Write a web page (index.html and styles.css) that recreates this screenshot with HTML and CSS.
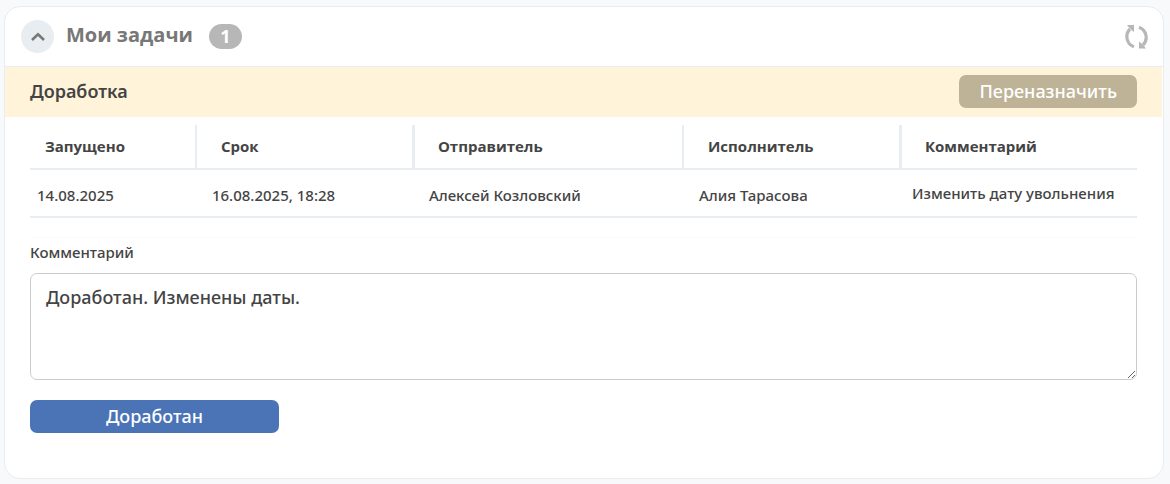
FILE: index.html
```html
<!DOCTYPE html>
<html lang="ru">
<head>
<meta charset="utf-8">
<meta name="viewport" content="width=device-width, initial-scale=1">
<title>Мои задачи</title>
<link rel="stylesheet" href="styles.css">
</head>
<body>
<main class="card">
  <header class="card-header">
    <button class="toggle" type="button" aria-label="Свернуть">
      <svg width="14" height="10" viewBox="0 0 14 10" fill="none" stroke="#777" stroke-width="2.6" aria-hidden="true"><path d="M1 8 7 2.300 13 8"/></svg>
    </button>
    <h1 class="title">Мои задачи</h1>
    <span class="count">1</span>
    <button class="refresh" type="button" aria-label="Обновить">
      <svg width="24" height="24" viewBox="0 0 24 24" aria-hidden="true">
        <g fill="none" stroke="#b7b7b7" stroke-width="3.200"><path d="M10 21.800A10.800 10.800 0 0 1 6 4"/><path d="M15 2.200A10.800 10.800 0 0 1 19 20"/></g>
        <path fill="#b7b7b7" d="M3 0H10V7L7.500 5 5 2.500ZM22 23.500H15V16.500L17.500 18.500 20 21Z"/>
      </svg>
    </button>
  </header>
  <section class="task-bar">
    <h2 class="task-name">Доработка</h2>
    <button class="button reassign" type="button">Переназначить</button>
  </section>
  <section class="task-body">
    <table class="tasks">
      <colgroup><col class="col-start"><col class="col-due"><col class="col-sender"><col class="col-assignee"><col></colgroup>
      <thead>
        <tr><th>Запущено</th><th>Срок</th><th class="wide-rule">Отправитель</th><th>Исполнитель</th><th class="wide-rule">Комментарий</th></tr>
      </thead>
      <tbody>
        <tr><td>14.08.2025</td><td>16.08.2025, 18:28</td><td>Алексей Козловский</td><td>Алия Тарасова</td><td class="note">Изменить дату увольнения</td></tr>
      </tbody>
    </table>
    <form class="reply">
      <label class="reply-label" for="comment">Комментарий</label>
      <textarea class="reply-text" id="comment">Доработан. Изменены даты.</textarea>
      <button class="button submit" type="button">Доработан</button>
    </form>
  </section>
</main>
</body>
</html>
```
FILE: styles.css
```css
* {
  box-sizing: border-box;
}

body {
  margin: 0;
  padding: 6px 6px 5px 4px;
  background: #f8f9fb;
  color: #444;
  font-family: "Noto Sans", "Open Sans", sans-serif;
  font-size: 15px;
  font-weight: 500;
  line-height: 20px;
}

button {
  border: 0;
  padding: 0;
  font: inherit;
  cursor: pointer;
}

.card {
  padding-bottom: 45px;
  border: 1px solid #e7edf0;
  border-radius: 16px;
  background: #fff;
}

.card-header {
  display: flex;
  align-items: center;
  height: 60px;
  padding: 0 15px 0 16px;
  border-bottom: 1px solid #e7edf0;
}

.toggle {
  display: grid;
  place-items: center;
  width: 33px;
  height: 33px;
  border-radius: 50%;
  background: #e7edf0;
}

.title {
  margin: 0 16px 4px 12px;
  color: #777;
  font-family: "Open Sans", "Noto Sans", sans-serif;
  font-size: 20px;
  font-weight: 700;
  line-height: 24px;
}

.count {
  width: 33px;
  border-radius: 13px;
  background: #b7b7b7;
  color: #fff;
  font-size: 18px;
  font-weight: 700;
  line-height: 25px;
  text-align: center;
}

.refresh {
  display: flex;
  margin-left: auto;
  background: none;
}

.task-bar {
  display: flex;
  align-items: center;
  justify-content: space-between;
  height: 50px;
  margin-right: 1px;
  padding: 0 25px 2px;
  background: #fff4da;
}

.task-name {
  margin: 0;
  font-size: 18px;
  font-weight: 600;
  line-height: 24px;
}

.button {
  height: 33px;
  border-radius: 7px;
  color: #fff;
  font-size: 18px;
  font-weight: 500;
  line-height: 32px;
}

.reassign {
  padding: 0 20px;
  background: #beb397;
}

.task-body {
  padding: 8px 26px 0 25px;
}

.tasks {
  width: 100%;
  table-layout: fixed;
  border-spacing: 0;
  text-align: left;
}

.col-start {
  width: 14.9%;
}

.col-due,
.col-assignee {
  width: 19.6%;
}

.col-sender {
  width: 24.4%;
}

th {
  height: 45px;
  padding: 0 15px 1px 24px;
  border-bottom: 2px solid #e7edf0;
  border-left: 2px solid #e7edf0;
  font-family: "Open Sans", "Noto Sans", sans-serif;
  font-weight: 700;
}

th:first-child {
  padding-left: 15px;
  border-left: 0;
}

.wide-rule {
  padding-left: 23px;
  border-left-width: 3px;
}

td {
  height: 48px;
  padding: 4px 0 0 17px;
  border-bottom: 2px solid #e7edf0;
  white-space: nowrap;
}

td:first-child {
  padding-left: 7px;
}

td.note {
  padding-top: 0;
  padding-left: 13px;
}

.reply {
  display: flex;
  flex-direction: column;
  margin-top: 19px;
  padding-top: 4px;
  border-top: 1px solid #fafafa;
}

.reply-label {
  margin-bottom: 11px;
}

.reply-text {
  height: 107px;
  padding: 11px 15px;
  border: 1px solid #ccc;
  border-radius: 7px;
  background: #fff;
  color: inherit;
  font: inherit;
  font-size: 18px;
  line-height: 24px;
  resize: vertical;
}

.submit {
  align-self: flex-start;
  width: 249px;
  margin-top: 20px;
  padding-bottom: 2px;
  background: #4b74b7;
}
```
